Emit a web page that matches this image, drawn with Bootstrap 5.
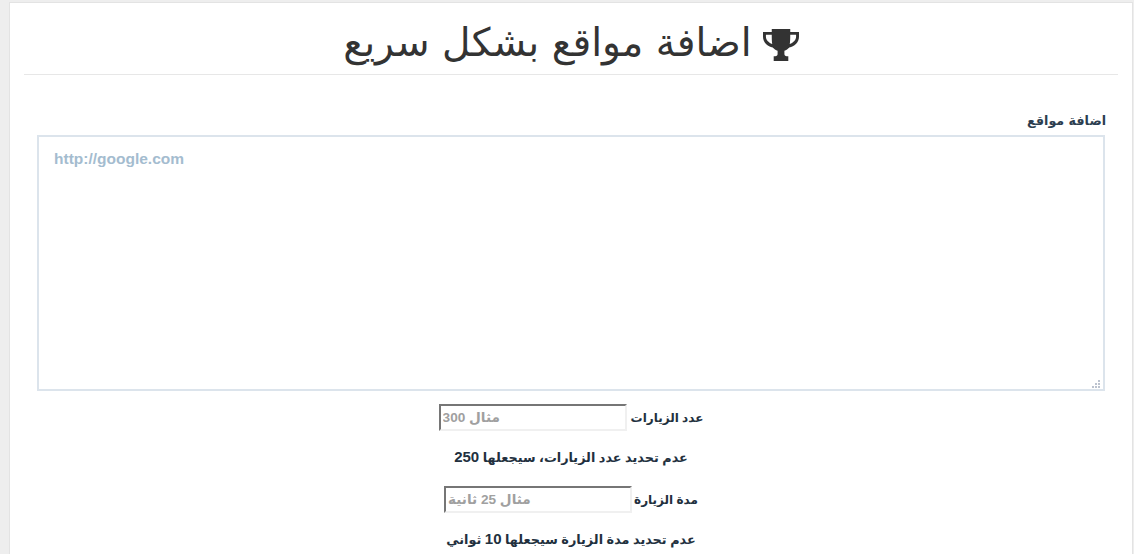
<!DOCTYPE html>
<html lang="ar" dir="rtl">
<head>
<meta charset="utf-8">
<title>اضافة مواقع بشكل سريع</title>
<link href="https://cdn.jsdelivr.net/npm/bootstrap@5.3.0/dist/css/bootstrap.min.css" rel="stylesheet">
<style>
html,body{height:554px;overflow:hidden}
body{background:#eee;font-family:"Liberation Sans","DejaVu Sans",sans-serif;color:#2c3e50;font-size:13px}
.sheet{margin:2px 1px 0 9px;background:#fff;border:1px solid #e3e3e3;border-bottom:0;height:552px;padding:0 14px}
.page-title{display:flex;justify-content:center;align-items:center;gap:11px;font-size:39.2px;font-weight:400;color:#333;margin:0;height:72px;line-height:86px;border-bottom:1px solid #e7e7e7;font-family:"DejaVu Sans",sans-serif}
.title-text{margin-top:9px}
.trophy{width:36px;height:32px;fill:#333;margin-top:13px;flex:none}
.site-form{padding:0 13px}
.site-label{display:block;font-weight:700;font-size:12.7px;margin:38px -1px 6px 0;line-height:16px;color:#2c3e50;font-family:"DejaVu Sans",sans-serif}
.site-box{display:block;width:100%;height:256px;border:2px solid #dce4ec;padding:10px 15px;font-size:15.5px;font-weight:700;direction:ltr;outline:0;color:#2c3e50;font-family:"Liberation Sans",sans-serif}
.site-box::placeholder{color:#a4bccf;opacity:1}
.site-box::-webkit-resizer{background-color:#fff;background-repeat:no-repeat;background-size:2px 2px;background-image:linear-gradient(#bcc3cf,#bcc3cf),linear-gradient(#bcc3cf,#bcc3cf),linear-gradient(#bcc3cf,#bcc3cf),linear-gradient(#bcc3cf,#bcc3cf),linear-gradient(#bcc3cf,#bcc3cf),linear-gradient(#bcc3cf,#bcc3cf);background-position:10px 6px,10px 9px,7px 9px,10px 12px,7px 12px,4px 12px}
.field-row{display:flex;justify-content:center;align-items:center;gap:4px;font-weight:700;color:#22303e;font-family:"Liberation Sans","DejaVu Sans",sans-serif;font-size:12px}
.field-row.tight{gap:2px}
.field-input{width:188px;height:27px;border-style:solid;border-width:2px;border-color:#767676 #f0f0f0 #f0f0f0 #767676;padding:1px 2px;font-size:13.600px;font-weight:700;font-family:"Liberation Sans","DejaVu Sans",sans-serif;outline:0;text-align:left}
.field-input::placeholder{color:#a0a0a0;opacity:1}
.field-note{text-align:center;font-weight:700;font-family:"Liberation Sans","DejaVu Sans",sans-serif;font-size:12.800px;color:#22303e;margin:0;height:18px;line-height:18px}
.digits{font-size:15px;line-height:1}
.gap-a{margin-top:13px}.gap-b{margin-top:18px}.gap-c{margin-top:19px}.gap-d{margin-top:18px}
</style>
</head>
<body>
<div class="sheet">
  <h1 class="page-title"><svg class="trophy" viewBox="0 0 37 33" preserveAspectRatio="none" aria-hidden="true"><path fill-rule="evenodd" d="M9 0h19v3h9v5c0 6-5 10-10 11-1.500 1.500-3 2.500-5 3.500V26c0 2 2 2 4 2v5H11v-5c2 0 4 0 4-2v-3.500C13 21.500 11.500 20.500 10 19 5 18 0 14 0 8V3h9V0zM3 6v2c0 3 2.500 6 6.500 7.500C9 13 9 9 9 6H3zm31 0h-6c0 3 0 7-.500 9.500C31.500 14 34 11 34 8V6z"/></svg><span class="title-text">اضافة مواقع بشكل سريع</span></h1>
  <form class="site-form">
    <label class="site-label" for="sites">اضافة مواقع</label>
    <textarea class="site-box" id="sites" placeholder="http://google.com"></textarea>
    <div class="field-row gap-a"><span>عدد الزيارات</span><input class="field-input" placeholder="مثال 300"></div>
    <p class="field-note gap-b">عدم تحديد عدد الزيارات، سيجعلها <span class="digits">250</span></p>
    <div class="field-row tight gap-c"><span>مدة الزيارة</span><input class="field-input" placeholder="مثال 25 ثانية"></div>
    <p class="field-note gap-d">عدم تحديد مدة الزيارة سيجعلها <span class="digits">10</span> ثواني</p>
  </form>
</div>
</body>
</html>
